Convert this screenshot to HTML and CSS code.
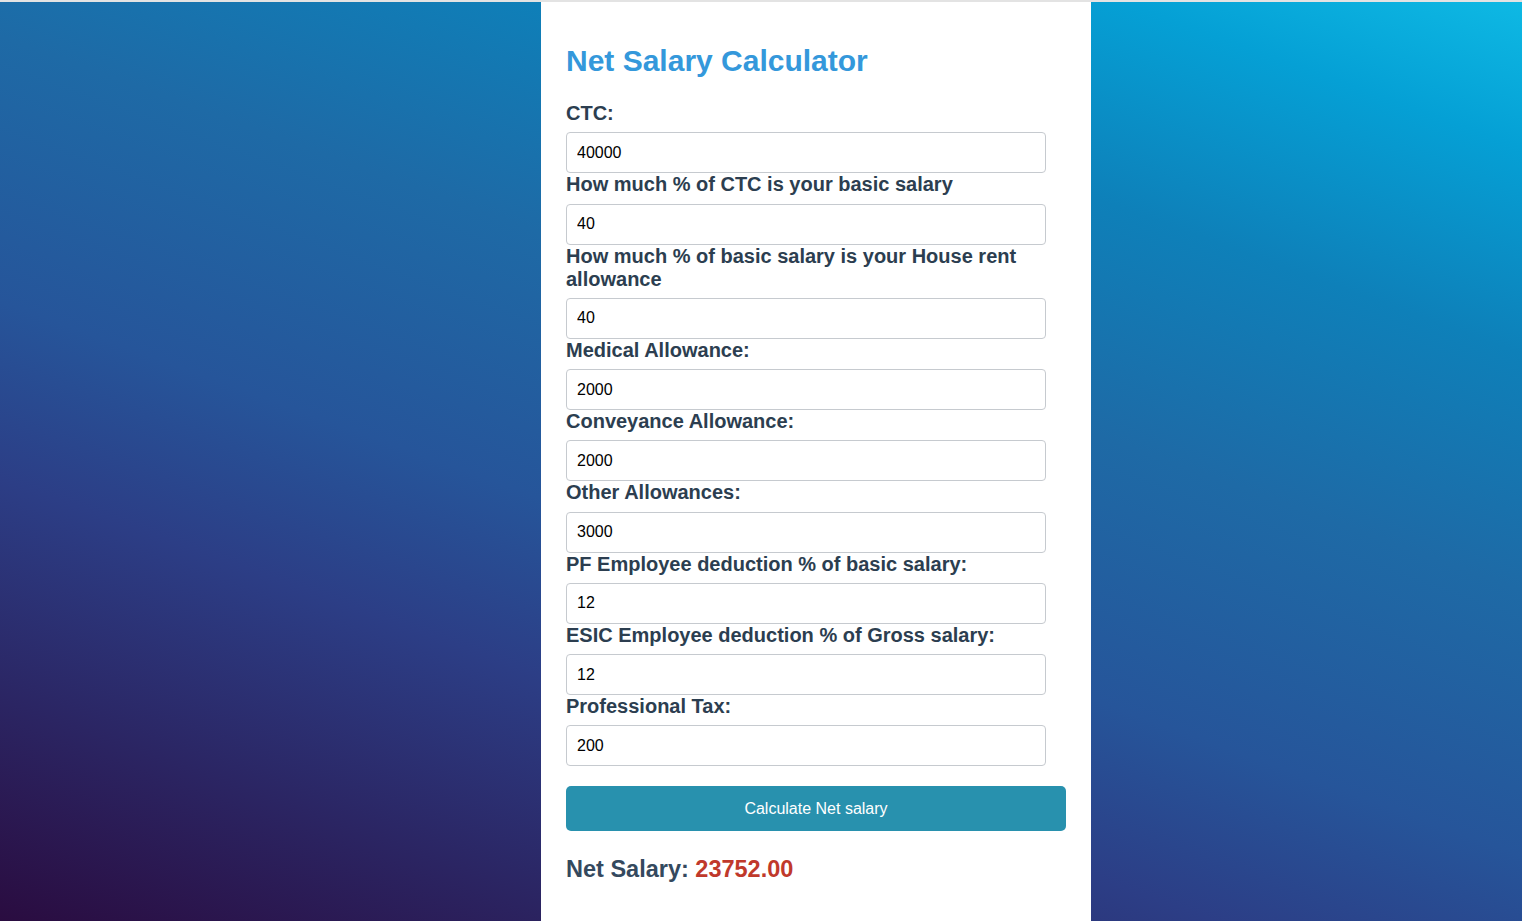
FILE: index.html
```html
<!DOCTYPE html>
<html lang="en">
<head>
<meta charset="utf-8">
<title>Net Salary Calculator</title>
<link rel="stylesheet" href="styles.css">
</head>
<body>
<main class="calculator">
  <h1 class="title">Net Salary Calculator</h1>
  <form class="form">
    <label class="label" for="ctc">CTC:</label>
    <input class="field" id="ctc" type="text" value="40000">
    <label class="label" for="basic">How much % of CTC is your basic salary</label>
    <input class="field" id="basic" type="text" value="40">
    <label class="label" for="hra">How much % of basic salary is your House rent allowance</label>
    <input class="field" id="hra" type="text" value="40">
    <label class="label" for="medical">Medical Allowance:</label>
    <input class="field" id="medical" type="text" value="2000">
    <label class="label" for="conveyance">Conveyance Allowance:</label>
    <input class="field" id="conveyance" type="text" value="2000">
    <label class="label" for="other">Other Allowances:</label>
    <input class="field" id="other" type="text" value="3000">
    <label class="label" for="pf">PF Employee deduction % of basic salary:</label>
    <input class="field" id="pf" type="text" value="12">
    <label class="label" for="esic">ESIC Employee deduction % of Gross salary:</label>
    <input class="field" id="esic" type="text" value="12">
    <label class="label" for="ptax">Professional Tax:</label>
    <input class="field" id="ptax" type="text" value="200">
    <button class="button" type="button">Calculate Net salary</button>
  </form>
  <p class="result">Net Salary: <span class="result-value">23752.00</span></p>
</main>
</body>
</html>
```

FILE: styles.css
```css
html, body {
  margin: 0;
  padding: 0;
  height: 100%;
}

body {
  box-sizing: border-box;
  border-top: 2px solid #e3e3e3;
  font-family: "Liberation Sans", Arial, sans-serif;
  background: linear-gradient(20deg,
    #2a0c40 0%,
    #2c3e86 30%,
    #26559a 42%,
    #1e6aa6 60%,
    #0e80b9 76%,
    #05a0d5 90%,
    #0eb9e4 100%);
  overflow: hidden;
}

.calculator {
  box-sizing: border-box;
  width: 550px;
  min-height: 100%;
  margin-left: 541px;
  padding: 22px 25px 30px;
  background: #ffffff;
}

.title {
  margin: 20px 0 23.5px;
  font-size: 30px;
  line-height: 34.5px;
  font-weight: bold;
  color: #3498db;
}

.form {
  display: flex;
  flex-direction: column;
  align-items: flex-start;
}

.label {
  display: block;
  width: 100%;
  margin-bottom: 7.25px;
  font-size: 20px;
  line-height: 23px;
  font-weight: bold;
  color: #2c3e50;
}

.field {
  box-sizing: border-box;
  width: 480px;
  height: 41px;
  margin: 0;
  padding: 0 10px;
  border: 1px solid #c6cacf;
  border-radius: 4px;
  font-family: "Liberation Sans", Arial, sans-serif;
  font-size: 16px;
  color: #000000;
  background: #ffffff;
}

.button {
  box-sizing: border-box;
  width: 500px;
  height: 45px;
  margin-top: 20px;
  border: none;
  border-radius: 5px;
  background: #2891ae;
  color: #ffffff;
  font-family: "Liberation Sans", Arial, sans-serif;
  font-size: 16px;
}

.result {
  margin: 25px 0 0;
  font-size: 23.5px;
  line-height: 26px;
  font-weight: bold;
  color: #34495e;
}

.result-value {
  color: #c0392b;
}
```
